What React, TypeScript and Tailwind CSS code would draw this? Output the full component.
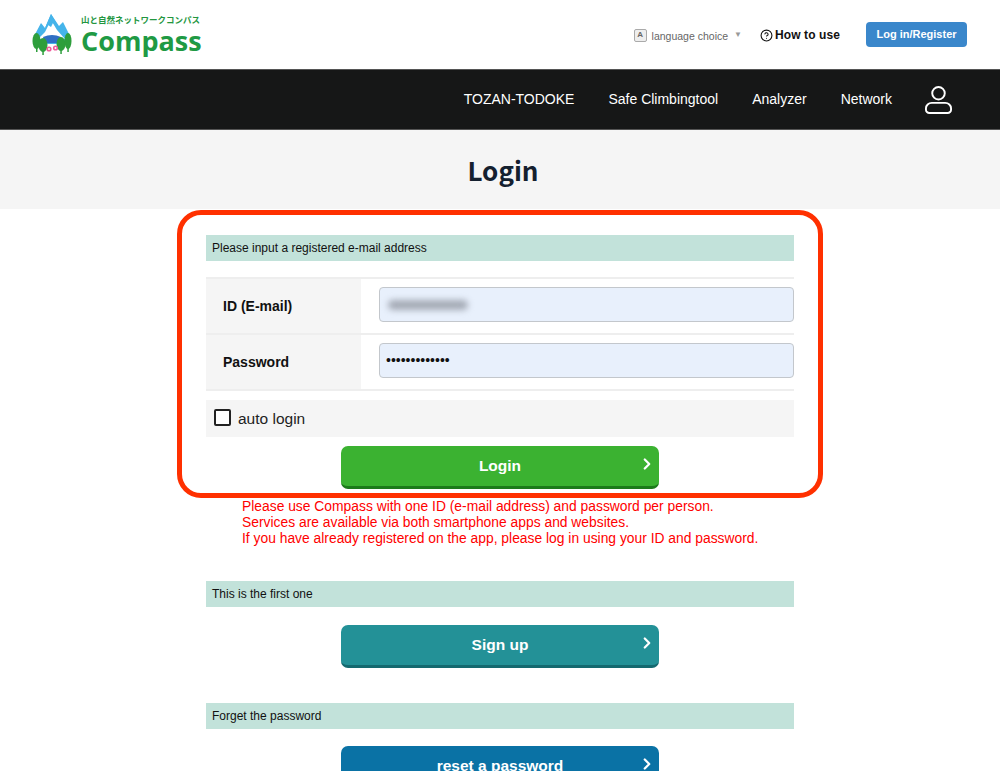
import { ChevronRight, CircleHelp } from "lucide-react";

const navItems = ["TOZAN-TODOKE", "Safe Climbingtool", "Analyzer", "Network"];

function Logo() {
    return (
        <div className="flex items-center">
            <svg width="40" height="42" viewBox="0 0 40 42" className="mr-[9px]">
                {/* mountains */}
                <path d="M1 24 L9 9 L13 14 L19 0 L27 12 L31 8 L39 24 L33 30 L7 30 Z" fill="#45b4ea" />
                <path d="M6 25 L13 18 L19 6 L25 16 L33 25 Z" fill="#ffffff" />
                <path d="M13 14 L19 0 L25 10 L21 9 L19 13 L16 11 Z" fill="#45b4ea" />
                {/* lake */}
                <path d="M11 23 Q20 19 29 23 L27 29 L13 29 Z" fill="#2f6fc4" />
                {/* trees */}
                <ellipse cx="4.5" cy="27" rx="4" ry="8" fill="#2e9e3c" />
                <rect x="4" y="33" width="1.5" height="5" fill="#2e9e3c" />
                <ellipse cx="11" cy="31" rx="4.5" ry="7" fill="#2e9e3c" />
                <rect x="10.3" y="36" width="1.5" height="5" fill="#2e9e3c" />
                <ellipse cx="29" cy="30" rx="4.5" ry="7" fill="#2e9e3c" />
                <rect x="28.3" y="35" width="1.5" height="5" fill="#2e9e3c" />
                <ellipse cx="36" cy="27" rx="3.5" ry="8" fill="#2e9e3c" />
                <rect x="35.3" y="33" width="1.5" height="5" fill="#2e9e3c" />
                {/* flowers */}
                <circle cx="17" cy="35" r="2.6" fill="#ee5d9c" />
                <circle cx="17" cy="35" r="1" fill="#ffffff" />
                <circle cx="23.5" cy="34" r="2.6" fill="#ee5d9c" />
                <circle cx="23.5" cy="34" r="1" fill="#ffffff" />
            </svg>
            <div className="flex flex-col">
                <span className="font-['Noto_Sans_CJK_JP',sans-serif] text-[8.5px] leading-[11px] font-bold text-[#23963f] whitespace-nowrap">
                    山と自然ネットワークコンパス
                </span>
                <span className="mt-[1px] font-['Open_Sans',sans-serif] text-[27px] leading-[30px] font-bold text-[#1f9a44]">
                    Compass
                </span>
            </div>
        </div>
    );
}

function UserIcon() {
    return (
        <svg width="27" height="30" viewBox="0 0 28 30" fill="none" stroke="#ffffff" strokeWidth="2" className="-ml-px">
            <circle cx="14" cy="8" r="6.5" />
            <path d="M7 18 H21 A6 5.5 0 0 1 27 23.5 V25 A3.5 3.5 0 0 1 23.5 28.5 H4.5 A3.5 3.5 0 0 1 1 25 V23.5 A6 5.5 0 0 1 7 18 Z" />
        </svg>
    );
}

function SectionHead({ text }: { text: string }) {
    return (
        <div className="h-[26px] bg-[#c2e2da] pl-[6px] flex items-center text-[12px] text-[#111]">
            {text}
        </div>
    );
}

function BigButton({ label, className }: { label: string; className: string }) {
    return (
        <button
            className={`relative block w-[318px] h-[43px] mx-auto rounded-[7px] border-b-[3px] text-white font-bold text-[15.5px] ${className}`}
        >
            {label}
            <ChevronRight size={18} strokeWidth={3} className="absolute right-[3px] top-[9px]" />
        </button>
    );
}

export default function App() {
    return (
        <div className="h-screen overflow-hidden bg-white font-['Liberation_Sans',sans-serif]">
            {/* ヘッダー */}
            <header className="h-[69px] flex items-center justify-between pl-[32px] pr-[33px]">
                <Logo />
                <div className="flex items-center">
                    <span className="w-[13px] h-[13px] mt-[1px] mr-[5px] border border-[#aaa] bg-[#eee] rounded-[2px] flex items-center justify-center text-[8px] font-bold text-[#666]">
                        A
                    </span>
                    <span className="text-[10.5px] text-[#666] pt-[4px]">language choice</span>
                    <span className="ml-[6px] mt-[1px] text-[8px] text-[#999]">▼</span>
                    <CircleHelp size={13} strokeWidth={2} className="ml-[18px] mt-[1px] mr-[2px] text-[#111]" />
                    <span className="mt-[1px] text-[12px] font-bold tracking-[0.1px] text-[#111]">How to use</span>
                    <button className="ml-[26px] w-[101px] h-[25px] rounded-[4px] bg-[#3a87cb] text-white text-[11px] font-bold">
                        Log in/Register
                    </button>
                </div>
            </header>

            {/* メニュー */}
            <nav className="h-[61px] bg-[#161717] border-t border-b border-[#555] flex items-center justify-end pr-[48px]">
                {navItems.map((item) => (
                    <span key={item} className="mr-[34px] text-[14px] text-white">
                        {item}
                    </span>
                ))}
                <UserIcon />
            </nav>

            {/* タイトル */}
            <div className="h-[79px] bg-[#f5f5f5] flex items-center justify-center pl-[6px]">
                <h1 className="font-['Noto_Sans_CJK_JP',sans-serif] text-[26px] font-bold text-[#14202f]">Login</h1>
            </div>

            <main className="relative w-[588px] mx-auto pt-[26px]">
                {/* 赤枠 */}
                <div className="absolute left-[-29px] top-[1px] w-[646px] h-[288px] border-[5px] border-[#ff3000] rounded-[24px]" />

                <SectionHead text="Please input a registered e-mail address" />

                <div className="mt-[16px] border-t-2 border-[#eeeeee]">
                    <div className="flex h-[56px] border-b-2 border-[#eeeeee]">
                        <div className="w-[155px] bg-[#f5f5f5] pl-[17px] flex items-center text-[14px] font-bold text-[#111]">
                            ID (E-mail)
                        </div>
                        <div className="flex-1 pl-[18px] pt-[8px]">
                            <div className="w-full h-[35px] rounded-[4px] border border-[#c3c7cc] bg-[#e8f0fc] pl-[8px] flex items-center">
                                <span className="w-[80px] h-[10px] rounded-full bg-[#a4aab5] blur-[3px]" />
                            </div>
                        </div>
                    </div>
                    <div className="flex h-[56px] border-b-2 border-[#eeeeee]">
                        <div className="w-[155px] bg-[#f5f5f5] pl-[17px] flex items-center text-[14px] font-bold text-[#111]">
                            Password
                        </div>
                        <div className="flex-1 pl-[18px] pt-[8px]">
                            <div className="w-full h-[35px] rounded-[4px] border border-[#c3c7cc] bg-[#e8f0fc] pl-[6px] flex items-center text-[14px] text-[#111]">
                                •••••••••••••
                            </div>
                        </div>
                    </div>
                </div>

                <div className="mt-[9px] h-[37px] bg-[#f5f5f5] pl-[8px] flex items-center">
                    <span className="w-[17px] h-[17px] -mt-[2px] border-2 border-[#222] rounded-[2px] bg-white" />
                    <span className="ml-[7px] text-[15.5px] text-[#222] pt-[1px]">auto login</span>
                </div>

                <div className="mt-[9px]">
                    <BigButton label="Login" className="bg-[#3bb231] border-[#1c7a1a]" />
                </div>

                <p className="mt-[9px] ml-[36px] text-[13.85px] leading-[16px] text-[#ff0000]">
                    Please use Compass with one ID (e-mail address) and password per person.
                    <br />
                    Services are available via both smartphone apps and websites.
                    <br />
                    If you have already registered on the app, please log in using your ID and password.
                </p>

                <div className="mt-[35px]">
                    <SectionHead text="This is the first one" />
                </div>
                <div className="mt-[18px]">
                    <BigButton label="Sign up" className="bg-[#239197] border-[#14696f]" />
                </div>

                <div className="mt-[35px]">
                    <SectionHead text="Forget the password" />
                </div>
                <div className="mt-[17px]">
                    <BigButton label="reset a password" className="bg-[#0a72a5] border-[#07557c]" />
                </div>
            </main>
        </div>
    );
}
